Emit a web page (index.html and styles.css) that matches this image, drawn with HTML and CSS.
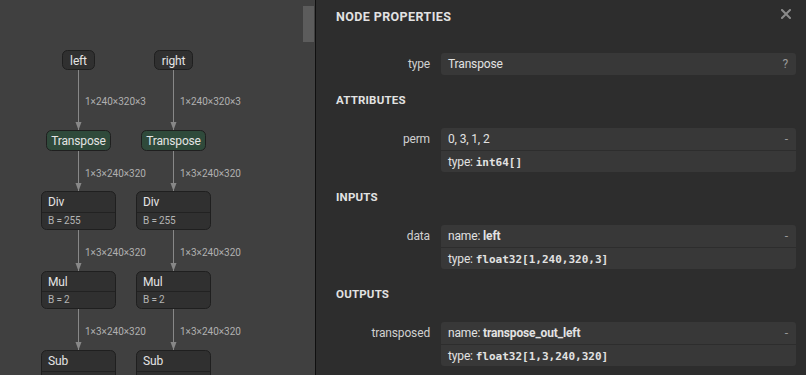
FILE: index.html
```html
<!DOCTYPE html>
<html lang="en">
<head>
    <meta charset="UTF-8">
    <meta name="viewport" content="width=device-width, initial-scale=1.0">
    <title>Node Properties</title>
    <link rel="stylesheet" href="styles.css">
</head>
<body>
    <div class="graph">
        <svg class="graph-svg" width="315" height="375" viewBox="0 0 315 375">
            <defs>
                <marker id="arrow" viewBox="0 0 8 8" refX="8" refY="4" markerWidth="8" markerHeight="8" orient="auto">
                    <path d="M0,1 L8,4 L0,7 z" fill="#888"/>
                </marker>
            </defs>

            <!-- edges -->
            <g class="edges">
                <line x1="78.5" y1="70" x2="78.5" y2="130" marker-end="url(#arrow)"/>
                <line x1="173.5" y1="70" x2="173.5" y2="130" marker-end="url(#arrow)"/>
                <line x1="78.5" y1="151" x2="78.5" y2="191" marker-end="url(#arrow)"/>
                <line x1="173.5" y1="151" x2="173.5" y2="191" marker-end="url(#arrow)"/>
                <line x1="78.5" y1="230" x2="78.5" y2="271" marker-end="url(#arrow)"/>
                <line x1="173.5" y1="230" x2="173.5" y2="271" marker-end="url(#arrow)"/>
                <line x1="78.5" y1="309" x2="78.5" y2="350" marker-end="url(#arrow)"/>
                <line x1="173.5" y1="309" x2="173.5" y2="350" marker-end="url(#arrow)"/>
            </g>
            <g class="edge-labels">
                <text x="85" y="105">1×240×320×3</text>
                <text x="180" y="105">1×240×320×3</text>
                <text x="85" y="177">1×3×240×320</text>
                <text x="180" y="177">1×3×240×320</text>
                <text x="85" y="256">1×3×240×320</text>
                <text x="180" y="256">1×3×240×320</text>
                <text x="85" y="335">1×3×240×320</text>
                <text x="180" y="335">1×3×240×320</text>
            </g>

            <!-- inputs -->
            <g class="node input">
                <rect x="62.5" y="50.5" width="32" height="19" rx="5"/>
                <text x="78.5" y="64.5">left</text>
            </g>
            <g class="node input">
                <rect x="154.5" y="50.5" width="38" height="19" rx="5"/>
                <text x="173.5" y="64.5">right</text>
            </g>

            <!-- transpose -->
            <g class="node shape">
                <rect x="46.5" y="130.5" width="64" height="20" rx="5"/>
                <text x="78.5" y="145">Transpose</text>
            </g>
            <g class="node shape">
                <rect x="141.5" y="130.5" width="64" height="20" rx="5"/>
                <text x="173.5" y="145">Transpose</text>
            </g>

            <!-- div -->
            <g class="node op">
                <rect x="41.5" y="191.5" width="74" height="38" rx="5"/>
                <line x1="42" y1="212.5" x2="115" y2="212.5"/>
                <text class="op-name" x="48" y="206">Div</text>
                <text class="op-attr" x="48" y="224">B = 255</text>
            </g>
            <g class="node op">
                <rect x="136.5" y="191.5" width="74" height="38" rx="5"/>
                <line x1="137" y1="212.5" x2="210" y2="212.5"/>
                <text class="op-name" x="143" y="206">Div</text>
                <text class="op-attr" x="143" y="224">B = 255</text>
            </g>

            <!-- mul -->
            <g class="node op">
                <rect x="41.5" y="271.5" width="74" height="37" rx="5"/>
                <line x1="42" y1="291.5" x2="115" y2="291.5"/>
                <text class="op-name" x="48" y="286">Mul</text>
                <text class="op-attr" x="48" y="303">B = 2</text>
            </g>
            <g class="node op">
                <rect x="136.5" y="271.5" width="74" height="37" rx="5"/>
                <line x1="137" y1="291.5" x2="210" y2="291.5"/>
                <text class="op-name" x="143" y="286">Mul</text>
                <text class="op-attr" x="143" y="303">B = 2</text>
            </g>

            <!-- sub -->
            <g class="node op">
                <rect x="41.5" y="350.5" width="74" height="38" rx="5"/>
                <line x1="42" y1="371.5" x2="115" y2="371.5"/>
                <text class="op-name" x="48" y="365">Sub</text>
            </g>
            <g class="node op">
                <rect x="136.5" y="350.5" width="74" height="38" rx="5"/>
                <line x1="137" y1="371.5" x2="210" y2="371.5"/>
                <text class="op-name" x="143" y="365">Sub</text>
            </g>
        </svg>
        <div class="scroll-thumb"></div>
    </div>

    <div class="sidebar">
        <div class="sidebar-header">
            <span class="sidebar-title">NODE PROPERTIES</span>
            <svg class="close" width="10" height="10" viewBox="0 0 10 10">
                <path d="M1,1 L9,9 M9,1 L1,9" stroke="#8a8a8a" stroke-width="2" stroke-linecap="square"/>
            </svg>
        </div>

        <div class="prop">
            <div class="prop-name">type</div>
            <div class="prop-box">
                <div class="prop-line">
                    <span>Transpose</span>
                    <span class="prop-btn">?</span>
                </div>
            </div>
        </div>

        <div class="section">ATTRIBUTES</div>
        <div class="prop">
            <div class="prop-name">perm</div>
            <div class="prop-box">
                <div class="prop-line">
                    <span>0, 3, 1, 2</span>
                    <span class="prop-btn">-</span>
                </div>
                <div class="prop-line">
                    <span>type: <code>int64[]</code></span>
                </div>
            </div>
        </div>

        <div class="section">INPUTS</div>
        <div class="prop">
            <div class="prop-name">data</div>
            <div class="prop-box">
                <div class="prop-line">
                    <span>name: <b>left</b></span>
                    <span class="prop-btn">-</span>
                </div>
                <div class="prop-line">
                    <span>type: <code>float32[1,240,320,3]</code></span>
                </div>
            </div>
        </div>

        <div class="section">OUTPUTS</div>
        <div class="prop">
            <div class="prop-name">transposed</div>
            <div class="prop-box">
                <div class="prop-line">
                    <span>name: <b>transpose_out_left</b></span>
                    <span class="prop-btn">-</span>
                </div>
                <div class="prop-line">
                    <span>type: <code>float32[1,3,240,320]</code></span>
                </div>
            </div>
        </div>
    </div>
</body>
</html>
```

FILE: styles.css
```css
* {
    box-sizing: border-box;
}
body {
    margin: 0;
    display: flex;
    height: 375px;
    overflow: hidden;
    font-family: Roboto, "Open Sans", sans-serif;
    font-size: 12px;
    letter-spacing: -0.15px;
    color: #e2e2e2;
    background-color: #2d2d2d;
}
.graph {
    position: relative;
    flex: none;
    width: 316px;
    height: 375px;
    background-color: #404040;
    border-right: 1px solid #101010;
    overflow: hidden;
}
.graph-svg {
    display: block;
}
.scroll-thumb {
    position: absolute;
    top: 6px;
    left: 303px;
    width: 11px;
    height: 36px;
    background-color: #5c5c5c;
}
.edges line {
    stroke: #888;
    stroke-width: 1;
}
.edge-labels text {
    font-size: 10px;
    letter-spacing: 0;
    fill: #b0b0b0;
}
.node rect {
    fill: #303030;
    stroke: #1f1f1f;
    stroke-width: 1;
}
.node line {
    stroke: #222;
    stroke-width: 1;
}
.node text {
    font-size: 12px;
    fill: #e4e4e4;
}
.input text,
.shape text {
    text-anchor: middle;
}
.shape rect {
    fill: #2f4a3b;
}
.op-attr {
    font-size: 10px !important;
    fill: #b4b4b4 !important;
}
.sidebar {
    flex: 1;
    padding: 0 10px 0 20px;
}
.sidebar-header {
    display: flex;
    justify-content: space-between;
    align-items: center;
    height: 32px;
}
.sidebar-title {
    font-size: 12.5px;
    font-weight: bold;
    letter-spacing: 0.4px;
}
.close {
    margin-right: 5px;
    margin-top: -4px;
}
.prop {
    display: flex;
    gap: 11px;
    margin-top: 21px;
}
.prop-name {
    flex: none;
    width: 94px;
    height: 22px;
    line-height: 22px;
    text-align: right;
    color: #d0d0d0;
}
.prop-box {
    flex: 1;
    background-color: #383838;
    border-radius: 3px;
}
.prop-line {
    display: flex;
    justify-content: space-between;
    height: 22px;
    line-height: 22px;
    padding: 0 8px 0 7px;
}
.prop-line + .prop-line {
    border-top: 1px solid #2d2d2d;
    height: 22px;
}
.prop-btn {
    color: #999;
}
.prop-line b {
    font-weight: bold;
}
.prop-line code {
    font-family: "DejaVu Sans Mono", monospace;
    font-size: 11px;
    font-weight: bold;
    letter-spacing: 0;
}
.section {
    font-size: 11.5px;
    font-weight: bold;
    letter-spacing: 0.2px;
    height: 16px;
    line-height: 16px;
    margin-top: 17px;
}
.section + .prop {
    margin-top: 20px;
}
```
